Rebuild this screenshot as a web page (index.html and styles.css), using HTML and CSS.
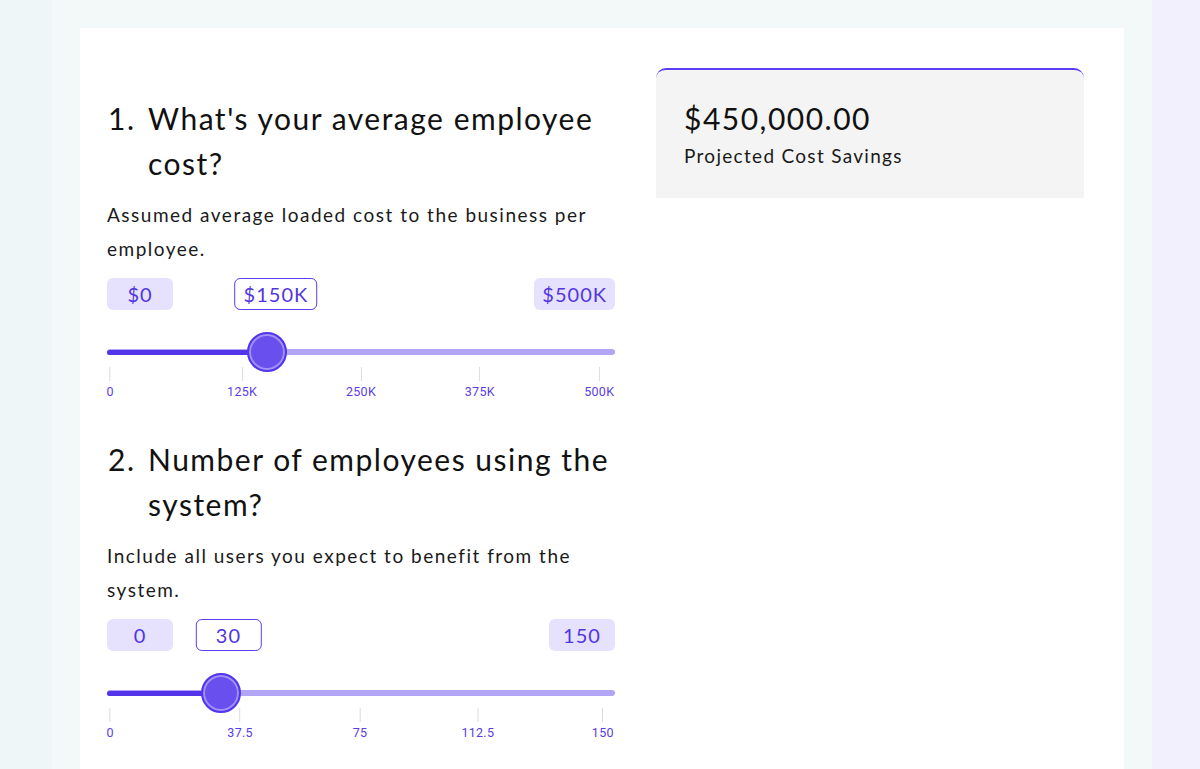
FILE: index.html
```html
<!DOCTYPE html>
<html lang="en">
<head>
<meta charset="utf-8">
<title>Cost Savings Calculator</title>
<link rel="stylesheet" href="styles.css">
</head>
<body>
<div class="page">
  <div class="side side-left"></div>
  <main class="stage">
    <section class="calc">
      <div class="questions">
        <div class="question">
          <h2 class="q-title"><span class="q-num">1.</span><span class="q-text">What's your average employee cost?</span></h2>
          <p class="q-desc">Assumed average loaded cost to the business per employee.</p>
          <div class="pills" style="--p:0.3">
            <span class="pill pill-min">$0</span>
            <span class="pill pill-current">$150K</span>
            <span class="pill pill-max">$500K</span>
          </div>
          <div class="slider" style="--p:0.3">
            <div class="track"></div>
            <div class="fill"></div>
            <div class="thumb"></div>
          </div>
          <div class="marks">
            <div class="mark" style="left:0.6%"><span class="tick"></span><span class="mark-label">0</span></div>
            <div class="mark" style="left:26.6%"><span class="tick"></span><span class="mark-label">125K</span></div>
            <div class="mark" style="left:50%"><span class="tick"></span><span class="mark-label">250K</span></div>
            <div class="mark" style="left:73.4%"><span class="tick"></span><span class="mark-label">375K</span></div>
            <div class="mark" style="left:96.9%"><span class="tick"></span><span class="mark-label">500K</span></div>
          </div>
        </div>
        <div class="question">
          <h2 class="q-title"><span class="q-num">2.</span><span class="q-text">Number of employees using the system?</span></h2>
          <p class="q-desc">Include all users you expect to benefit from the system.</p>
          <div class="pills" style="--p:0.2">
            <span class="pill pill-min">0</span>
            <span class="pill pill-current">30</span>
            <span class="pill pill-max">150</span>
          </div>
          <div class="slider" style="--p:0.2">
            <div class="track"></div>
            <div class="fill"></div>
            <div class="thumb"></div>
          </div>
          <div class="marks">
            <div class="mark" style="left:0.6%"><span class="tick"></span><span class="mark-label">0</span></div>
            <div class="mark" style="left:26.2%"><span class="tick"></span><span class="mark-label">37.5</span></div>
            <div class="mark" style="left:49.8%"><span class="tick"></span><span class="mark-label">75</span></div>
            <div class="mark" style="left:73%"><span class="tick"></span><span class="mark-label">112.5</span></div>
            <div class="mark" style="left:97.6%"><span class="tick"></span><span class="mark-label">150</span></div>
          </div>
        </div>
      </div>
      <aside class="result">
        <div class="result-value">$450,000.00</div>
        <div class="result-label">Projected Cost Savings</div>
      </aside>
    </section>
  </main>
  <div class="side side-right"></div>
</div>
</body>
</html>
```

FILE: styles.css
```css
* { box-sizing: border-box; }

html, body {
  margin: 0;
  padding: 0;
  height: 100%;
}

body {
  font-family: "Lato", "Noto Sans", sans-serif;
  color: #111111;
  background: #f3f8f8;
  overflow: hidden;
}

.page {
  display: flex;
  min-height: 769px;
}

.side-left {
  width: 52px;
  background: #eef6f7;
}

.side-right {
  width: 48px;
  background: #f3f0fd;
}

.stage {
  flex: 1;
  background: #f3f8f8;
  padding: 28px 28px 0 28px;
  display: flex;
}

.calc {
  flex: 1;
  background: #ffffff;
  display: grid;
  grid-template-columns: 508px 428px;
  column-gap: 41px;
  align-items: start;
  padding: 40px 40px 0 27px;
}

.question {
  padding-top: 28px;
  padding-bottom: 8px;
}

.q-title {
  display: flex;
  margin: 0;
  font-size: 30px;
  font-weight: 400;
  line-height: 45px;
  letter-spacing: 1.5px;
  color: #111111;
}

.q-num {
  width: 41px;
  flex: none;
  padding-left: 1px;
}

.q-text {
  flex: 1;
  margin-right: -4px;
}

.q-desc {
  margin: 12px 0 0 0;
  font-size: 19px;
  line-height: 34px;
  letter-spacing: 1.5px;
  color: #1a1a1a;
}

.pills {
  position: relative;
  display: flex;
  justify-content: space-between;
  height: 32px;
  margin-top: 12px;
}

.pill {
  min-width: 66px;
  height: 32px;
  padding: 0 8px;
  border-radius: 6px;
  display: inline-flex;
  align-items: center;
  justify-content: center;
  font-size: 20px;
  letter-spacing: 1px;
  color: #5236e0;
  background: #e6e1fd;
}

.pill-current {
  position: absolute;
  top: 0;
  left: calc(var(--p) * 100%);
  transform: translateX(calc(var(--p) * -100%));
  background: #ffffff;
  border: 1px solid #5b3df5;
}

.slider {
  position: relative;
  height: 30px;
  margin-top: 27px;
}

.track {
  position: absolute;
  left: 0;
  right: 0;
  top: 12px;
  height: 6px;
  border-radius: 3px;
  background: #b2a5f6;
}

.fill {
  position: absolute;
  left: 0;
  top: 12.5px;
  height: 5px;
  border-radius: 3px;
  width: calc(20px + var(--p) * (100% - 40px));
  background: #5334ea;
}

.thumb {
  position: absolute;
  top: -5px;
  left: calc(20px + var(--p) * (100% - 40px));
  transform: translateX(-50%);
  width: 40px;
  height: 40px;
  border-radius: 50%;
  background: #6a4fef;
  border: 2px solid #5535ec;
  box-shadow: inset 0 0 0 2px #a291f7;
}

.marks {
  position: relative;
  height: 34px;
}

.mark {
  position: absolute;
  top: 0;
  transform: translateX(-50%);
  display: flex;
  flex-direction: column;
  align-items: center;
}

.tick {
  width: 1px;
  height: 14px;
  background: #dcdcdc;
}

.mark-label {
  margin-top: 4px;
  font-family: "Roboto", "Inter", sans-serif;
  font-size: 12.5px;
  line-height: 14px;
  letter-spacing: 0.3px;
  color: #5a3de6;
  white-space: nowrap;
}

.result {
  background: #f4f4f4;
  border-top: 2px solid #5b3df5;
  border-radius: 10px 10px 0 0;
  padding: 26px 28px 27px 28px;
}

.result-value {
  font-size: 30px;
  line-height: 45px;
  letter-spacing: 1.5px;
  color: #111111;
}

.result-label {
  font-size: 19px;
  line-height: 30px;
  letter-spacing: 1.3px;
  color: #1a1a1a;
}
```
